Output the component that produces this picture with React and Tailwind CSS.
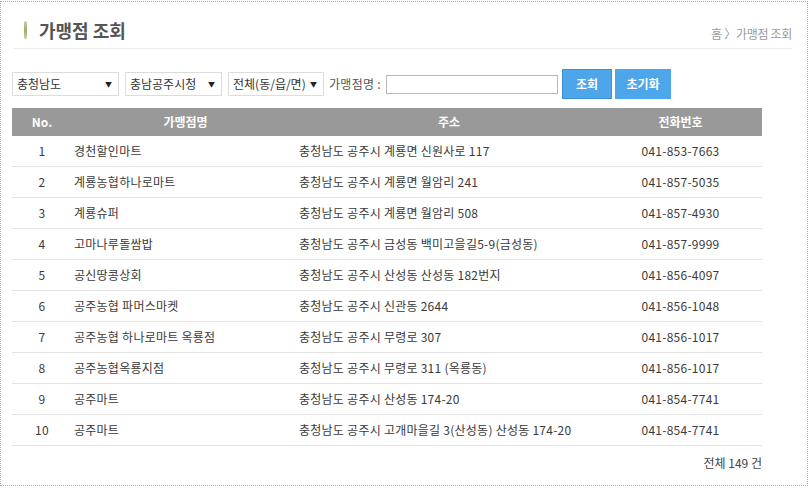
import React from "react";

const rows = [
  ["1", "경천할인마트", "충청남도 공주시 계룡면 신원사로 117", "041-853-7663"],
  ["2", "계룡농협하나로마트", "충청남도 공주시 계룡면 월암리 241", "041-857-5035"],
  ["3", "계룡슈퍼", "충청남도 공주시 계룡면 월암리 508", "041-857-4930"],
  ["4", "고마나루돌쌈밥", "충청남도 공주시 금성동 백미고을길5-9(금성동)", "041-857-9999"],
  ["5", "공신땅콩상회", "충청남도 공주시 산성동 산성동 182번지", "041-856-4097"],
  ["6", "공주농협 파머스마켓", "충청남도 공주시 신관동 2644", "041-856-1048"],
  ["7", "공주농협 하나로마트 옥룡점", "충청남도 공주시 무령로 307", "041-856-1017"],
  ["8", "공주농협옥룡지점", "충청남도 공주시 무령로 311 (옥룡동)", "041-856-1017"],
  ["9", "공주마트", "충청남도 공주시 산성동 174-20", "041-854-7741"],
  ["10", "공주마트", "충청남도 공주시 고개마을길 3(산성동) 산성동 174-20", "041-854-7741"],
];

function Select({ label, w }) {
  return (
    <div className={`${w} h-[24px] border border-[#dcdcdc] flex items-center justify-between pl-[4px] pr-[6px] text-[12px] text-[#333] bg-white`}>
      <span>{label}</span>
      <span className="text-[7px] text-[#222]">▼</span>
    </div>
  );
}

export default function App() {
  return (
    <div
      className="w-[811px] h-[489px] bg-white overflow-hidden"
      style={{ fontFamily: '"Noto Sans CJK KR", "Noto Sans", sans-serif' }}
    >
      <div className="mt-px w-[808px] h-[485px] border border-dotted border-[#b0b0b0]">
        {/* title */}
        <div className="ml-[13px] mr-[15px] pt-[19px] pb-[7px] border-b border-[#ececec] flex justify-between">
          <div className="flex items-center h-[18px] pl-[10px]">
            <div className="w-[3px] h-[18px] rounded-full bg-gradient-to-b from-[#c9d4a8] via-[#9aae6c] to-[#c9d4a8]" />
            <div className="ml-[12px] text-[18px] leading-[18px] font-bold text-[#555]">가맹점 조회</div>
          </div>
          <div className="mt-[6px] text-[12px] leading-[14px] text-[#999] tracking-[-0.3px]">홈 〉가맹점 조회</div>
        </div>

        {/* filters */}
        <div className="ml-[11px] mt-[20px] h-[30px] flex items-center">
          <Select label="충청남도" w="w-[107px]" />
          <div className="w-[6px]" />
          <Select label="충남공주시청" w="w-[97px]" />
          <div className="w-[6px]" />
          <Select label="전체(동/읍/면)" w="w-[96px]" />
          <span className="ml-[5px] text-[12px] text-[#555] tracking-[0.3px]">가맹점명 :</span>
          <div className="ml-[5px] w-[172px] h-[19px] border border-[#b8b8b8] bg-white" />
          <button className="ml-[4px] w-[50px] h-[30px] bg-[#4ea6ea] border border-[#3d8fd0] text-white text-[12px] font-bold">조회</button>
          <button className="ml-[3px] w-[56px] h-[30px] bg-[#4ea6ea] text-white text-[12px] font-bold">초기화</button>
        </div>

        {/* table */}
        <div className="ml-[11px] mt-[9px] w-[750px]">
          <div className="h-[28px] bg-[#999] flex items-center text-white text-[12px] font-bold">
            <div className="w-[60px] text-center">No.</div>
            <div className="w-[227px] text-center">가맹점명</div>
            <div className="w-[300px] text-center">주소</div>
            <div className="flex-1 text-center">전화번호</div>
          </div>
          {rows.map((r) => (
            <div key={r[0]} className="h-[31px] border-b border-[#e3e3e3] flex items-center text-[12px] text-[#3a3a3a] tracking-[0.25px]">
              <div className="w-[60px] text-center">{r[0]}</div>
              <div className="w-[227px] pl-[2px]">{r[1]}</div>
              <div className="w-[300px]">{r[2]}</div>
              <div className="flex-1 text-center">{r[3]}</div>
            </div>
          ))}
          <div className="mt-[10px] text-right text-[12px] leading-[14px] text-[#444]">전체 149 건</div>
        </div>
      </div>
    </div>
  );
}
